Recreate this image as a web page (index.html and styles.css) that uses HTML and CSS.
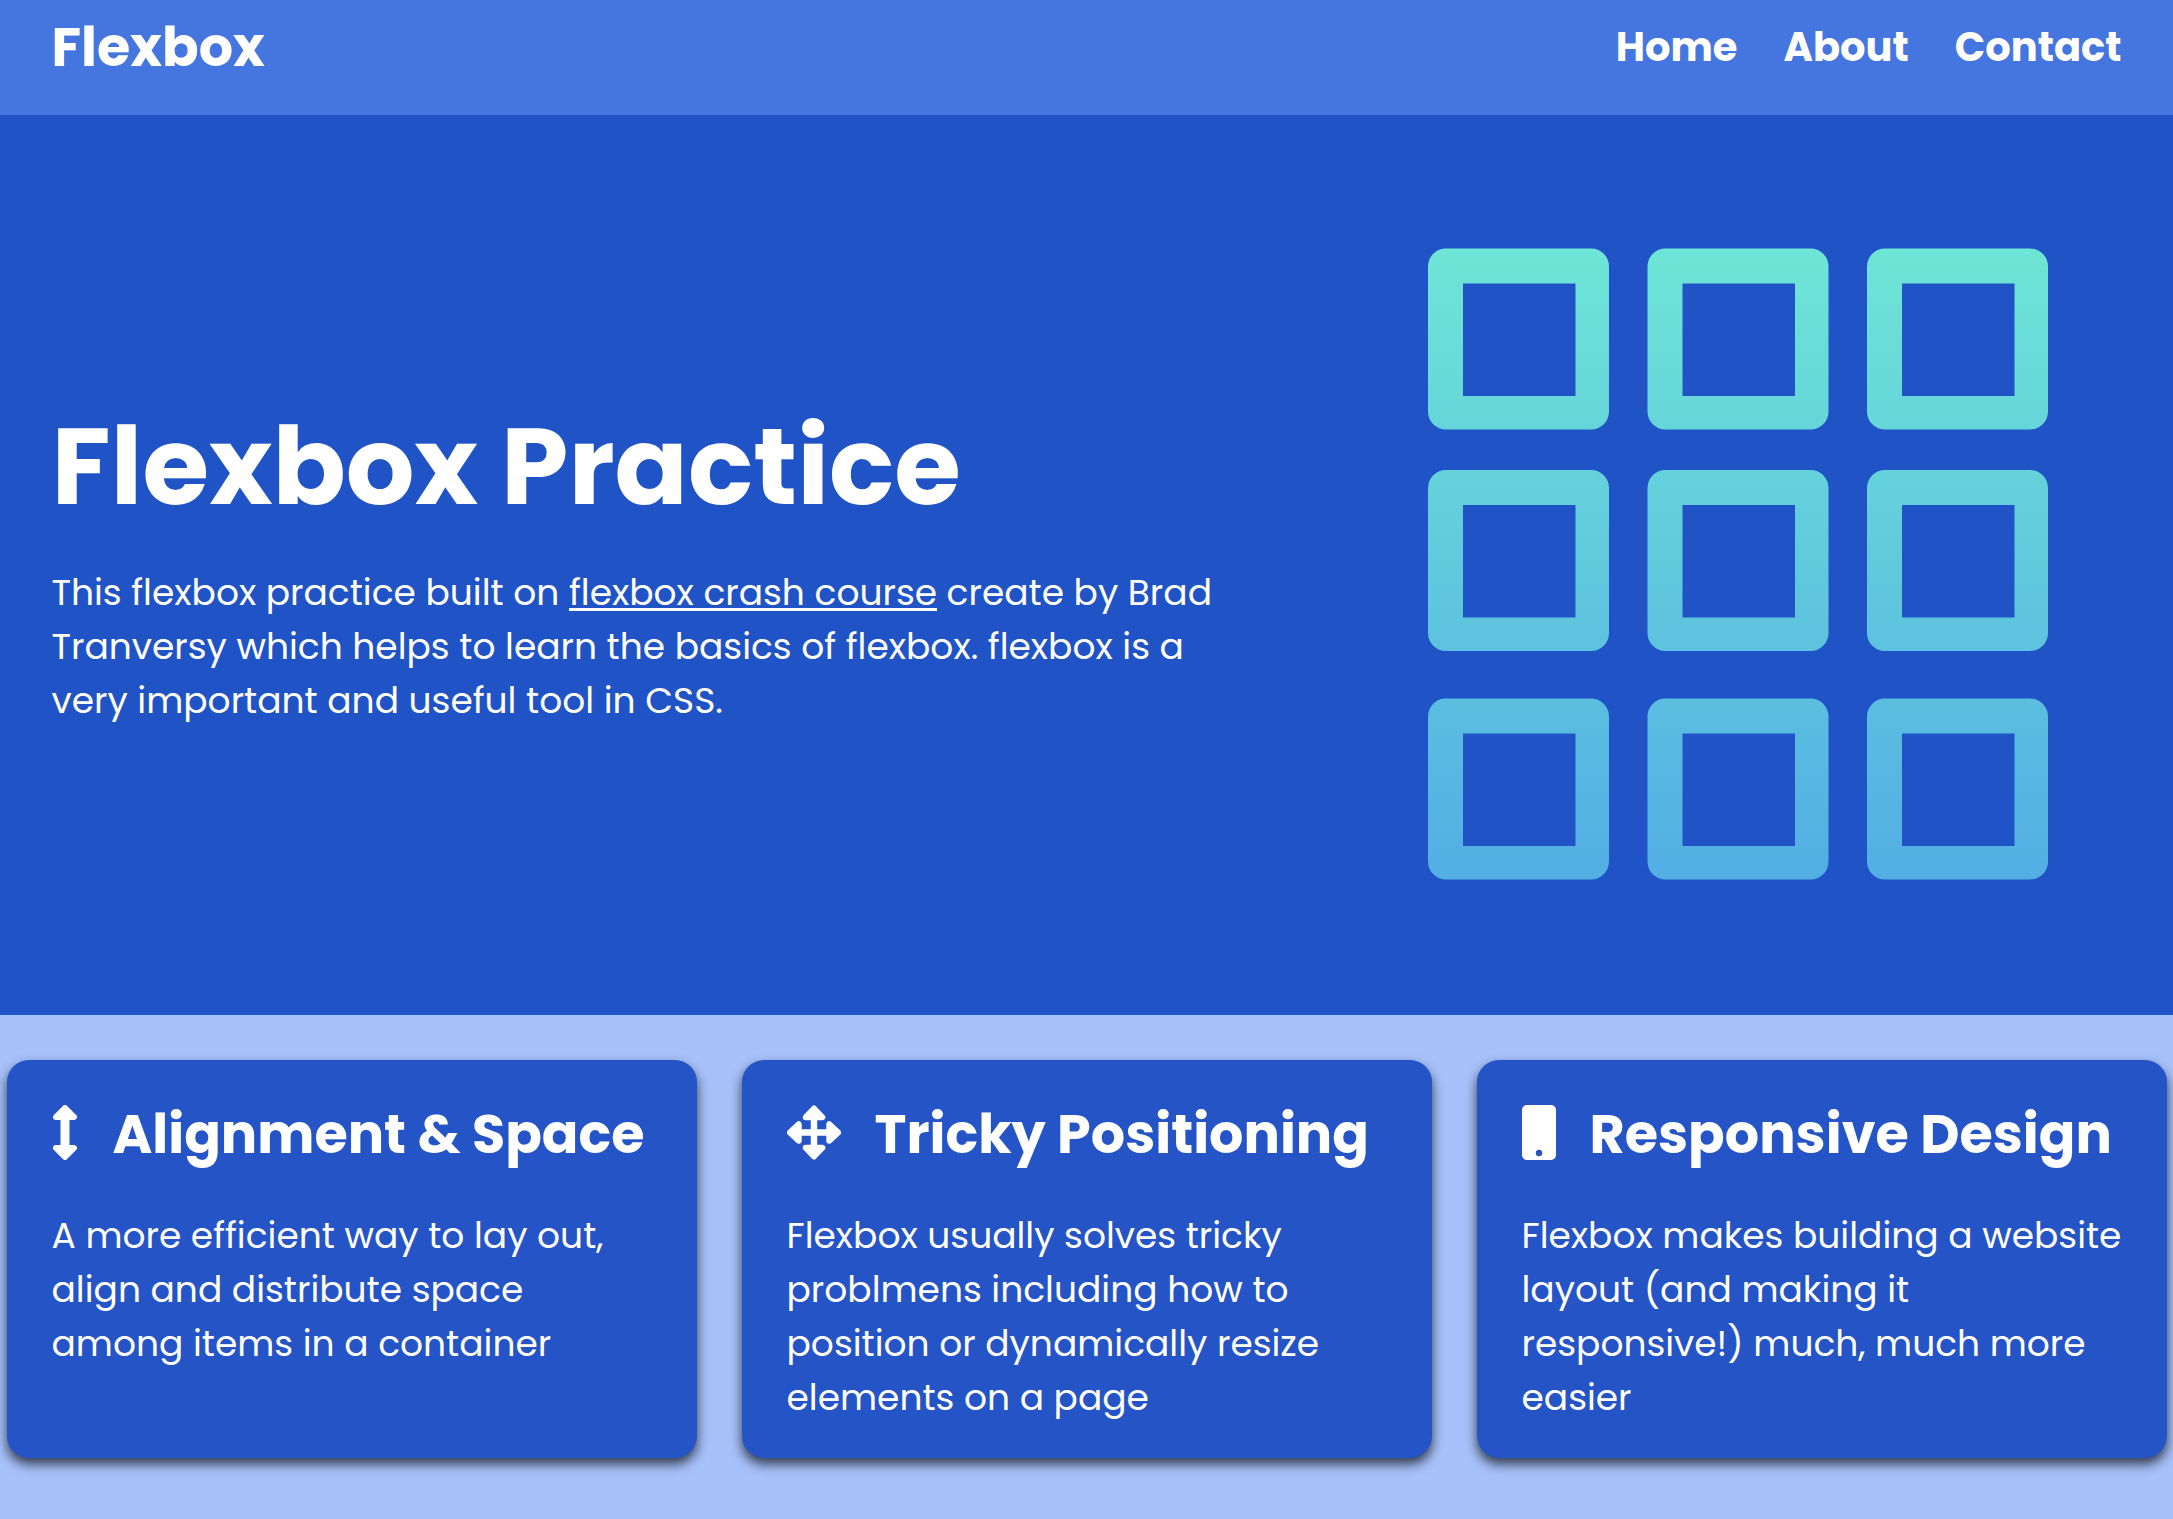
FILE: index.html
```
<!DOCTYPE html>
<html lang="en">
<head>
  <meta charset="utf-8">
  <meta name="viewport" content="width=device-width, initial-scale=1">
  <title>Flexbox Practice</title>
  <link rel="stylesheet" href="styles.css">
</head>
<body>
  <header class="navbar">
    <div class="container navbar-inner">
      <h1 class="logo">Flexbox</h1>
      <nav>
        <ul class="nav-list">
          <li><a href="#home">Home</a></li>
          <li><a href="#about">About</a></li>
          <li><a href="#contact">Contact</a></li>
        </ul>
      </nav>
    </div>
  </header>

  <main>
    <section class="hero" id="home">
      <div class="container hero-inner">
        <div class="hero-text">
          <h2 class="hero-title">Flexbox Practice</h2>
          <p>This flexbox practice built on <a href="#course">flexbox crash course</a> create by Brad Tranversy which helps to learn the basics of flexbox. flexbox is a very important and useful tool in CSS.</p>
        </div>
        <svg class="hero-art" viewBox="0 0 620 632" role="img" aria-label="Grid of nine squares">
          <defs>
            <linearGradient id="fade" gradientUnits="userSpaceOnUse" x1="0" y1="0" x2="0" y2="632">
              <stop offset="0" stop-color="#6ee5d6"/>
              <stop offset="1" stop-color="#53aee4"/>
            </linearGradient>
            <path id="cell" fill-rule="evenodd" d="M18 0H163A18 18 0 0 1 181 18V163A18 18 0 0 1 163 181H18A18 18 0 0 1 0 163V18A18 18 0 0 1 18 0ZM35 35V147.500H147.500V35Z"/>
            <clipPath id="cells">
              <use href="#cell" x="0" y="0.500"/><use href="#cell" x="219.500" y="0.500"/><use href="#cell" x="439" y="0.500"/>
              <use href="#cell" x="0" y="222"/><use href="#cell" x="219.500" y="222"/><use href="#cell" x="439" y="222"/>
              <use href="#cell" x="0" y="450.500"/><use href="#cell" x="219.500" y="450.500"/><use href="#cell" x="439" y="450.500"/>
            </clipPath>
          </defs>
          <g clip-path="url(#cells)"><rect width="620" height="632" fill="url(#fade)"/></g>
        </svg>
      </div>
    </section>

    <section class="features" id="about">
      <div class="container cards">
        <article class="card">
          <h3 class="card-title">
            <svg class="icon" width="27" height="55" viewBox="-1 0 27 55" aria-hidden="true">
              <path d="M12 3 21 12H3ZM12 52 21 43H3Z" stroke="currentColor" stroke-width="6" stroke-linejoin="round"/>
              <path d="M7.500 12h9v31h-9z"/>
            </svg>
            Alignment &amp; Space
          </h3>
          <p>A more efficient way to lay out, align and distribute space among items in a container</p>
        </article>
        <article class="card">
          <h3 class="card-title">
            <svg class="icon" width="54" height="55" viewBox="0 0 55 55" aria-hidden="true">
              <path d="M27.500 3 36 12H19ZM27.500 52 36 43H19ZM3 27.500 12 19V36ZM52 27.500 43 19V36Z" stroke="currentColor" stroke-width="6" stroke-linejoin="round"/>
              <path d="M24.200 12h6.600v31h-6.600zM12 24.200h31v6.600H12z"/>
            </svg>
            Tricky Positioning
          </h3>
          <p>Flexbox usually solves tricky problmens including how to position or dynamically resize elements on a page</p>
        </article>
        <article class="card">
          <h3 class="card-title">
            <svg class="icon" width="34" height="55" viewBox="0 0 35 55" preserveAspectRatio="none" aria-hidden="true">
              <path fill-rule="evenodd" d="M5 0H30A5 5 0 0 1 35 5V50A5 5 0 0 1 30 55H5A5 5 0 0 1 0 50V5A5 5 0 0 1 5 0ZM17.500 44.700A3.300 3.300 0 1 0 17.500 51.300A3.300 3.300 0 1 0 17.500 44.700Z"/>
            </svg>
            Responsive Design
          </h3>
          <p>Flexbox makes building a website layout (and making it responsive!) much, much more easier</p>
        </article>
      </div>
    </section>
  </main>
</body>
</html>
```
FILE: styles.css
```
* {
  box-sizing: border-box;
  margin: 0;
  padding: 0;
}

body {
  background: #a7c1fb;
  color: #fff;
  font-family: Poppins, Inter, sans-serif;
  font-size: 36px;
  line-height: 54px;
}

a {
  color: inherit;
}

.container {
  max-width: 2160px;
  margin: 0 auto;
}

/* Navbar */
.navbar {
  background: #4576e0;
}

.navbar-inner {
  display: flex;
  align-items: center;
  justify-content: space-between;
  padding: 7px 45px 28px;
}

.logo {
  font-size: 54px;
  line-height: 80px;
}

.nav-list {
  display: flex;
  gap: 46px;
  font-size: 40px;
  font-weight: 700;
  list-style: none;
}

.nav-list a {
  text-decoration: none;
}

/* Hero */
.hero {
  background: #2054c6;
}

.hero-inner {
  display: flex;
  align-items: center;
  justify-content: space-between;
  gap: 45px;
  padding: 133px 119px 135px 45px;
}

.hero-text {
  max-width: 1200px;
}

.hero-title {
  margin-bottom: 32px;
  font-size: 108px;
  line-height: 134px;
}

.hero-text a {
  text-decoration-thickness: 3px;
  text-underline-offset: 3px;
}

.hero-art {
  flex: 0 1 620px;
  min-width: 0;
}

/* Feature cards */
.features {
  padding: 45px 0;
}

.cards {
  display: grid;
  grid-template-columns: repeat(3, minmax(0, 1fr));
  gap: 45px;
}

.card {
  padding: 45px 45px 33px;
  border-radius: 22px;
  background: #2454c6;
  box-shadow: 0 6px 12px rgba(0, 0, 0, 0.7);
}

.card-title {
  display: flex;
  align-items: flex-start;
  gap: 34px;
  margin-bottom: 46px;
  font-size: 54px;
  line-height: 58px;
  white-space: nowrap;
}

.icon {
  flex: none;
  fill: currentColor;
}
```
